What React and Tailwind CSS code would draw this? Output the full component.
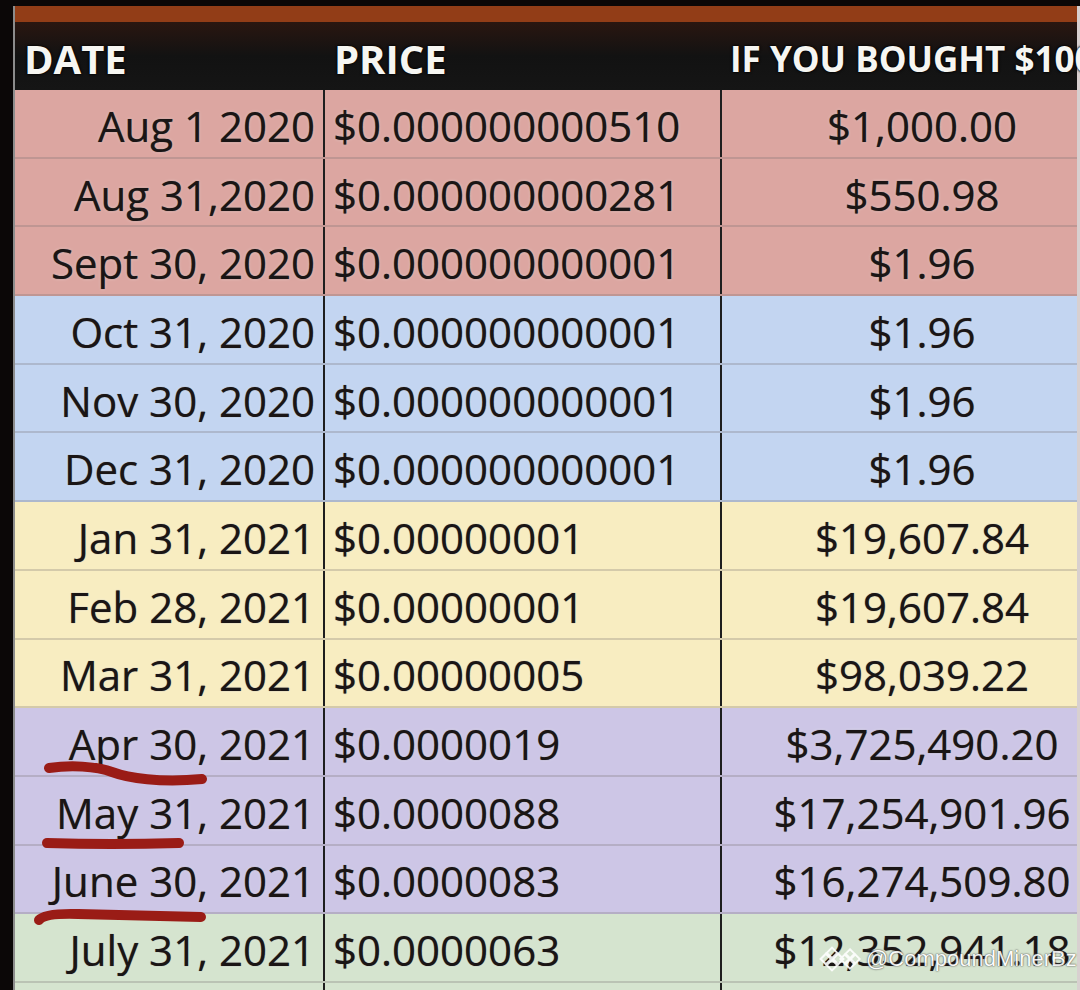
import React from "react";

const rows = [
  { d: "Aug 1 2020", p: "$0.000000000510", v: "$1,000.00", bg: "bg-[#dca6a1]" },
  { d: "Aug 31,2020", p: "$0.000000000281", v: "$550.98", bg: "bg-[#dca6a1]" },
  { d: "Sept 30, 2020", p: "$0.000000000001", v: "$1.96", bg: "bg-[#dca6a1]" },
  { d: "Oct 31, 2020", p: "$0.000000000001", v: "$1.96", bg: "bg-[#c3d5f1]" },
  { d: "Nov 30, 2020", p: "$0.000000000001", v: "$1.96", bg: "bg-[#c3d5f1]" },
  { d: "Dec 31, 2020", p: "$0.000000000001", v: "$1.96", bg: "bg-[#c3d5f1]" },
  { d: "Jan 31, 2021", p: "$0.00000001", v: "$19,607.84", bg: "bg-[#f8edc1]" },
  { d: "Feb 28, 2021", p: "$0.00000001", v: "$19,607.84", bg: "bg-[#f8edc1]" },
  { d: "Mar 31, 2021", p: "$0.00000005", v: "$98,039.22", bg: "bg-[#f8edc1]" },
  { d: "Apr 30, 2021", p: "$0.0000019", v: "$3,725,490.20", bg: "bg-[#cdc6e6]" },
  { d: "May 31, 2021", p: "$0.0000088", v: "$17,254,901.96", bg: "bg-[#cdc6e6]" },
  { d: "June 30, 2021", p: "$0.0000083", v: "$16,274,509.80", bg: "bg-[#cdc6e6]" },
  { d: "July 31, 2021", p: "$0.0000063", v: "$12,352,941.18", bg: "bg-[#d5e4cf]" },
  { d: "", p: "", v: "", bg: "bg-[#d5e4cf]" },
];

function BinanceMark({ className }) {
  return (
    <svg viewBox="0 0 32 32" className={className}>
      <g fill="none" stroke="#ffffff" strokeWidth="2.4" strokeLinejoin="miter">
        <path d="M16 3 L22 9 L16 15 L10 9 Z" />
        <path d="M16 17 L22 23 L16 29 L10 23 Z" />
        <path d="M9 10 L15 16 L9 22 L3 16 Z" />
        <path d="M23 10 L29 16 L23 22 L17 16 Z" />
      </g>
      <path d="M16 13 L19 16 L16 19 L13 16 Z" fill="#ffffff" />
    </svg>
  );
}

export default function App() {
  return (
    <div
      className="relative w-[1080px] h-[990px] overflow-hidden bg-[#0b0707] pt-[6px] pl-[13px]"
      style={{ fontFamily: '"Open Sans", "Noto Sans", sans-serif' }}
    >
      <div className="flex flex-col h-full border-l-2 border-[#8c8c8c] border-r-[3px] border-r-[#d8d0d0]">
        {/* orange top bar */}
        <div className="h-[16px] shrink-0 bg-[#923d17]" />
        {/* header */}
        <div className="flex h-[68px] shrink-0 bg-gradient-to-b from-[#2a1610] via-[#121212] to-[#151515] text-[#f6f6f2] font-bold text-[40px] [text-shadow:0_0_3px_#000,0_0_2px_#000]">
          <div className="w-[310px] shrink-0 flex items-center pl-[9px] pt-[6px]">DATE</div>
          <div className="w-[397px] shrink-0 flex items-center pl-[9px] pt-[6px]">PRICE</div>
          <div className="w-[400px] shrink-0 flex items-center pl-[8px] pt-[6px] text-[35px] whitespace-nowrap">
            IF YOU BOUGHT $1000
          </div>
        </div>
        {/* rows */}
        {rows.map((r, i) => (
          <div
            key={i}
            className={`flex h-[68.7px] shrink-0 ${r.bg} border-b-2 border-[rgba(120,110,110,0.28)] text-[42px] leading-none text-[#1a1515] [text-shadow:0_0_1px_rgba(26,21,21,0.6),0_0_3px_rgba(255,255,255,0.5)]`}
          >
            <div className="w-[310px] shrink-0 flex items-center justify-end pr-[8px] pt-[5px] border-r-2 border-[#1e1e1e] whitespace-nowrap">
              {r.d}
            </div>
            <div className="w-[397px] shrink-0 flex items-center pl-[8px] pt-[5px] border-r-2 border-[#1e1e1e] whitespace-nowrap">
              {r.p}
            </div>
            <div className="w-[400px] shrink-0 flex items-center justify-center pt-[5px] whitespace-nowrap">
              {r.v}
            </div>
          </div>
        ))}
      </div>

      {/* red hand-drawn underlines */}
      <svg className="absolute left-0 top-0 w-[1080px] h-[990px] pointer-events-none" viewBox="0 0 1080 990">
        <g fill="none" stroke="#9a1c16" strokeWidth="10" strokeLinecap="round">
          <path d="M49 768 C 70 765, 96 766, 112 772 S 160 783, 202 779" />
          <path d="M47 843 Q 110 845 179 843" />
          <path d="M39 920 Q 45 913 78 914 L 201 917" />
        </g>
      </svg>

      {/* watermark */}
      <div className="absolute left-[818px] top-[945px] flex items-center gap-[2px] opacity-90">
        <BinanceMark className="w-[28px] h-[28px]" />
        <BinanceMark className="w-[24px] h-[24px] -ml-[10px]" />
        <span
          className="ml-[2px] text-[22px] leading-none text-white [text-shadow:0_0_2px_#555,0_0_1px_#333]"
          style={{ fontFamily: '"Liberation Sans", Arial, sans-serif' }}
        >
          @CompoundMinerBz
        </span>
      </div>
    </div>
  );
}
